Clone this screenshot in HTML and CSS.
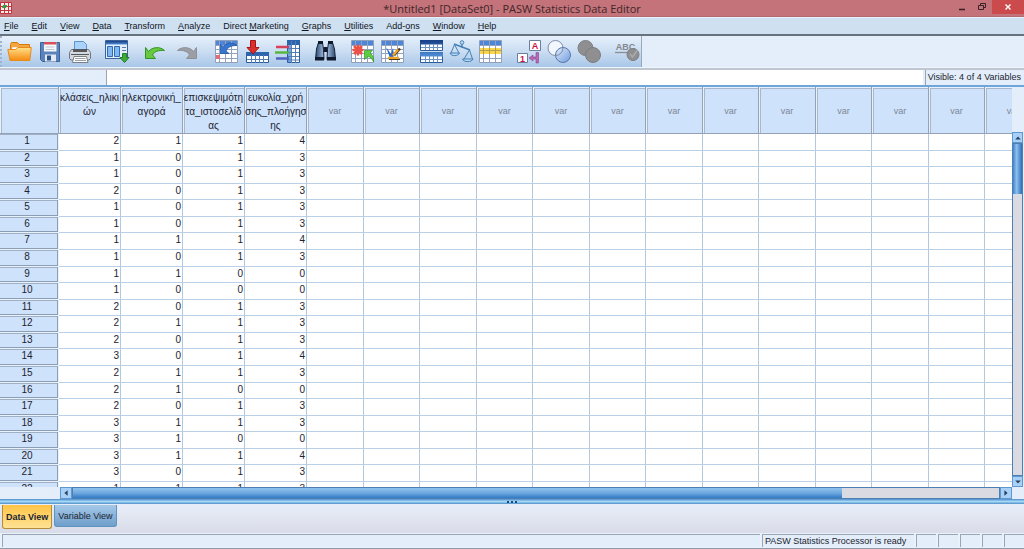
FILE: index.html
```html
<!DOCTYPE html>
<html lang="en">
<head>
<meta charset="utf-8">
<title>*Untitled1 [DataSet0] - PASW Statistics Data Editor</title>
<link rel="stylesheet" href="styles.css">
</head>
<body>
<svg class="defs" aria-hidden="true">
  <defs>
    <linearGradient id="gold" x1="0" y1="0" x2="0" y2="1"><stop offset="0" stop-color="#ffe08a"/><stop offset="1" stop-color="#f58a10"/></linearGradient>
    <linearGradient id="blue" x1="0" y1="0" x2="0" y2="1"><stop offset="0" stop-color="#173f86"/><stop offset="1" stop-color="#4f8ed6"/></linearGradient>
    <linearGradient id="disc" x1="0" y1="0" x2="1" y2="1"><stop offset="0" stop-color="#e2ebfa"/><stop offset="1" stop-color="#6f9de0"/></linearGradient>
    <linearGradient id="tube" x1="0" y1="0" x2="1" y2="0"><stop offset="0" stop-color="#2c466e"/><stop offset=".5" stop-color="#b9d4f4"/><stop offset="1" stop-color="#2c466e"/></linearGradient>
    <symbol id="sheet" viewBox="0 0 24 24">
      <path fill="#fff" stroke="#8fa0ba" d="M.5.5h22v22H.5z"/>
      <path fill="#4d86d8" d="M1 1h21v4H1z"/>
      <path fill="none" stroke="#93a3bd" d="M1 5.500h21M1 9.500h21M1 13.500h21M1 18.500h21M4.500 1v21M10.500 1v21M16.500 1v21"/>
    </symbol>
  </defs>
</svg>
<div class="window">
  <header class="titlebar">
    <svg class="app-icon" viewBox="0 0 12 12"><path fill="#f5efe9" stroke="#c9303e" d="M.5.5h11v11H.5z"/><path stroke="#c9303e" fill="none" d="M0 4.500h12M0 8.500h12M4.500 0v12M8.500 0v12"/><path fill="#3c9a46" d="M3 3h4l-1 3H2z"/></svg>
    <h1>*Untitled1 [DataSet0] - PASW Statistics Data Editor</h1>
    <div class="win-buttons">
      <button aria-label="Minimize"><svg viewBox="0 0 10 10"><path stroke="#3a2226" stroke-width="1.600" d="M2 7.500h6"/></svg></button>
      <button aria-label="Restore"><svg viewBox="0 0 10 10"><path fill="none" stroke="#3a2226" d="M1.500 3.500h5v4h-5zM3.500 3V1.500h5v4H7"/></svg></button>
      <button class="close" aria-label="Close"><svg viewBox="0 0 10 10"><path stroke="#fff" stroke-width="1.400" d="M2.500 2.500l5 5M7.500 2.500l-5 5"/></svg></button>
    </div>
  </header>

  <nav class="menubar" aria-label="Main menu">
    <a href="#"><u>F</u>ile</a><a href="#"><u>E</u>dit</a><a href="#"><u>V</u>iew</a><a href="#"><u>D</u>ata</a><a href="#"><u>T</u>ransform</a><a href="#"><u>A</u>nalyze</a><a href="#">Direct <u>M</u>arketing</a><a href="#"><u>G</u>raphs</a><a href="#"><u>U</u>tilities</a><a href="#">Add-<u>o</u>ns</a><a href="#"><u>W</u>indow</a><a href="#"><u>H</u>elp</a>
  </nav>

  <div class="toolband">
    <div class="toolbar" role="toolbar" aria-label="Data editor">
      <div class="group">
        <button aria-label="Open"><svg viewBox="0 0 25 24"><path fill="#f6a63a" stroke="#d9790d" d="M3.500 19V4.500l1-2h6l1.500 2h10.500V18z"/><path fill="#fff" stroke="#e2b069" stroke-width=".6" d="M5 7h16v5H5z"/><path fill="url(#gold)" stroke="#e58a1c" d="M.8 9.500h8l2-2h13.500l-1.500 13H3z"/></svg></button>
        <button aria-label="Save"><svg viewBox="0 0 25 24"><path fill="#5b83bd" stroke="#3c6297" d="M3.500 2.500h19v19h-17l-2-2z"/><path fill="#f7f7fa" d="M7 2h12.500v9.500H7z"/><path fill="#d9505c" d="M7 2h12.500v2.500H7z"/><path stroke="#bcc5d4" d="M8.500 7h9M8.500 9.500h9"/><path fill="#e3e9f2" d="M8 14.500h11v7H8z"/><path fill="#2c528b" d="M10 15.500h4v5h-4z"/></svg></button>
        <button aria-label="Print"><svg viewBox="0 0 25 24"><path fill="#a9d3fb" stroke="#5f93cc" d="M7.500 10V1.500h9l3 3V10z"/><path fill="#d5d8dc" stroke="#717780" d="M4.500 9.500h17l2 3v6l-1.500 1.500H4l-1.500-1.500v-6z"/><path fill="#55595f" d="M6 9h14v3H6zM4 14h18v1H4z"/><path fill="#fff" stroke="#7b8087" d="M7 16.500h12.500l1.500 6H5.500z"/><path stroke="#9da3aa" d="M8 18.500h10.500M8 20.500h11"/></svg></button>
      </div>
      <div class="group">
        <button aria-label="Recall dialog"><svg viewBox="0 0 25 24"><path fill="#e5effb" stroke="#3b6296" d="M.5.500h22v18H.5z"/><path fill="url(#blue)" d="M1 1h21v3.500H1z"/><path fill="#7eb8f0" stroke="#2f6ab0" d="M2.500 6.500h5v10h-5zM9.500 6.500h5v10h-5z"/><path stroke="#517fba" d="M17 7.500h4M17 10.500h4"/><path fill="#3cae35" stroke="#227e27" d="M17.500 13.500h4v4H24l-4.500 5-4.500-5h2.500z"/></svg></button>
      </div>
      <div class="group history">
        <button aria-label="Undo"><svg viewBox="0 0 25 24"><path fill="#68c83f" stroke="#2f9526" d="M2.500 7.500v11h10l-3-3.500c2-3.500 5.500-5 12-4.500-4-4-12-4-16 1z"/></svg></button>
        <button aria-label="Redo"><svg viewBox="0 0 25 24"><path fill="#9b9fa5" stroke="#8e9298" d="M21.500 7.500v11h-10l3-3.500c-2-3.500-5.500-5-12-4.500 4-4 12-4 16 1z"/></svg></button>
      </div>
      <div class="group">
        <button aria-label="Go to case"><svg viewBox="0 0 25 24"><use href="#sheet" width="24" height="24"/><path fill="#e36a76" d="M1 15h4v4H1z"/><path fill="#3776d0" stroke="#1b4fa0" stroke-width=".7" d="M5.500 4.500v9h8.500l-3-2.500c2-4 5-5.500 11-5.500-4-3.500-11-3-14 1.500z"/></svg></button>
        <button aria-label="Go to variable"><svg viewBox="0 0 25 24"><path fill="#fff" stroke="#2e5d9d" d="M1.500 12.500h22v10h-22z"/><path fill="#2c65ae" d="M1 12h23v4H1z"/><path stroke="#537fb5" d="M2 19.500h21M6.500 15v8M10.500 15v8M14.500 15v8M18.500 15v8"/><path fill="#dc2f2b" stroke="#a01616" d="M5.500.5h5v7H14l-6 6.500-6-6.500h3.500z"/></svg></button>
        <button aria-label="Variables"><svg viewBox="0 0 25 24"><path fill="#fff" stroke="#2e5d9d" d="M12.500.5h12v22h-12z"/><path fill="#73a6e4" d="M13 5h4v17h-4z"/><path fill="#2c65ae" d="M12 0h13v5H12z"/><path stroke="#537fb5" d="M13 8.500h11M13 12.500h11M13 16.500h11M13 20h11M16.500 1v22M20.500 1v22"/><path stroke="#d64258" stroke-width="2.500" d="M1 7h13"/><path stroke="#54b83f" stroke-width="2.500" d="M0 12.500h14"/><path stroke="#4d61bd" stroke-width="2.500" d="M1 18.500h13"/></svg></button>
      </div>
      <div class="group">
        <button aria-label="Find"><svg viewBox="0 0 25 24"><path fill="url(#tube)" stroke="#14233b" d="M5.500 2.500h4l1 7 .5 10H2.500L3.500 9zM15.500 2.500h4L21.500 9l1 10.500H14l.5-10z"/><path fill="#0f1a2c" d="M5 1h5v3H5zM15 1h5v3h-5zM2 17h9v3.500H2zM14 17h9v3.500h-9zM10.500 7h4v5h-4z"/></svg></button>
      </div>
      <div class="group">
        <button aria-label="Insert cases"><svg viewBox="0 0 25 24"><use href="#sheet" width="24" height="24"/><path stroke="#ec5148" stroke-width="2.500" d="M7 4.500v11M1.500 10h11M3 6l8 8M11 6l-8 8"/><path fill="#5bcd3e" stroke="#2f9526" stroke-width=".7" d="M13.500 10.500h8l-2.500 2.500c3 2 4 5 3.500 9-1-3-3-5-5.500-5.500l-3.500 3z"/></svg></button>
        <button aria-label="Insert variable"><svg viewBox="0 0 25 24"><use href="#sheet" width="24" height="24"/><path fill="#2b68c6" d="M5 7l5 7 2-6 1 7-1 3H9z"/><path stroke="#4d3a20" stroke-width="2.500" d="M13 15.500l6-7"/><path stroke="#eda42a" stroke-width="2.500" d="M7 18h11M12 15.500l5-6"/><path stroke="#4d3a20" d="M8 19.500h11"/></svg></button>
      </div>
      <div class="group">
        <button aria-label="Split file"><svg viewBox="0 0 25 24"><path fill="#fff" stroke="#2e5d9d" d="M1.500.5h22v10h-22zM1.500 12.500h22v10h-22z"/><path fill="url(#blue)" d="M1 0h23v4.500H1zM1 12h23v4.500H1z"/><path stroke="#6c92c1" d="M2 7.500h21M2 19.500h21M6.500 4v6M10.500 4v6M14.500 4v6M18.500 4v6M6.500 16v6M10.500 16v6M14.500 16v6M18.500 16v6"/></svg></button>
        <button aria-label="Weight cases"><svg viewBox="0 0 25 24"><g fill="none" stroke="#4680b5"><path stroke-width="1.400" d="M5 4l16 6M13 1v7"/><path d="M5.500 4.500L2 13M5.500 4.500L10 13M20.500 10L15 19M20.500 10l3 9"/></g><path fill="#b8d9f6" stroke="#4680b5" d="M1 13h9.500c-1 3.500-8.500 3.500-9.500 0zM13.500 19H24c-1 3.500-9.500 3.500-10.500 0z"/><circle cx="13" cy="2.500" r="1.800" fill="#c5e0f7" stroke="#4680b5"/></svg></button>
        <button aria-label="Select cases"><svg viewBox="0 0 25 24"><use href="#sheet" width="24" height="24"/><path fill="#f8d54b" d="M1 8h21v6H1z"/><path fill="none" stroke="#b69d49" d="M1 10.500h21M4.500 8v6M10.500 8v6M16.500 8v6"/></svg></button>
      </div>
      <div class="group">
        <button aria-label="Value labels"><svg viewBox="0 0 25 24"><path fill="#fff" stroke="#6b7e9c" d="M12.500.5h11v10h-11zM.5 13.500h10v9h-10z"/><path fill="#b867b5" stroke="#8e448e" stroke-width=".6" d="M12 18l4-3v2h3v-4.500h2.500V23H19v-4h-3v2z"/><text x="18" y="9" class="tag">A</text><text x="5.500" y="21.500" class="tag">1</text></svg></button>
        <button aria-label="Use variable sets"><svg viewBox="0 0 25 24"><circle cx="8.500" cy="8" r="7.500" fill="#f2f6fd" stroke="#7d8da8"/><circle cx="16" cy="15" r="7.500" fill="url(#disc)" stroke="#5878ac"/><path fill="none" stroke="#7d8da8" d="M16 8a7.500 7.500 0 0 1-7.500 7.500"/></svg></button>
        <button aria-label="Show all variables"><svg viewBox="0 0 25 24"><g fill="#8f8f91" stroke="#7d7d80"><circle cx="8.500" cy="8" r="7.500"/><circle cx="16" cy="15" r="7.500"/></g></svg></button>
      </div>
      <div class="group">
        <button aria-label="Spell check"><svg viewBox="0 0 25 24"><text x="10.500" y="10" class="abc">ABC</text><path stroke="#8a8d93" stroke-width="1.300" d="M0 12.500h17"/><circle cx="18" cy="14.500" r="6" fill="#8f8f91" stroke="#7d7d80"/><path fill="none" stroke="#a9abad" stroke-width="1.500" d="M15 14l2.500 3 5-7"/></svg></button>
      </div>
    </div>
  </div>

  <div class="cellbar">
    <output class="cell-name" aria-label="Cell"></output>
    <input class="cell-edit" type="text" aria-label="Cell value">
    <span class="visible">Visible: 4 of 4 Variables</span>
  </div>

  <main class="editor">
    <div class="sheet">
      <table>
        <colgroup id="cols"></colgroup>
        <thead><tr id="heads">
          <td class="corner"></td>
          <th scope="col">κλάσεις_ηλικι<br>ών</th>
          <th scope="col">ηλεκτρονική_<br>αγορά</th>
          <th scope="col">επισκεψιμότη<br>τα_ιστοσελίδ<br>ας</th>
          <th scope="col">ευκολία_χρή<br>σης_πλοήγησ<br>ης</th>
        </tr></thead>
        <tbody id="rows"></tbody>
      </table>
    </div>
    <div class="vscroll">
      <button aria-label="Scroll up"><svg viewBox="0 0 10 10"><path d="M5 3l3.500 4h-7z"/></svg></button>
      <div class="track"><div class="thumb"></div></div>
      <button aria-label="Scroll down"><svg viewBox="0 0 10 10"><path d="M5 7L1.500 3h7z"/></svg></button>
    </div>
    <div class="hscroll">
      <button aria-label="Scroll left"><svg viewBox="0 0 10 10"><path d="M3 5l4-3.500v7z"/></svg></button>
      <div class="track"><div class="thumb"></div></div>
      <button aria-label="Scroll right"><svg viewBox="0 0 10 10"><path d="M7 5L3 1.500v7z"/></svg></button>
    </div>
  </main>

  <div class="splitter"><i></i><i></i><i></i></div>

  <div class="tabs">
    <button class="tab active">Data View</button>
    <button class="tab">Variable View</button>
  </div>

  <footer class="status">
    <span class="grow"></span>
    <span class="message">PASW Statistics Processor is ready</span>
    <span></span><span></span><span></span><span></span><span></span>
  </footer>
</div>
<script src="grid.js"></script>
</body>
</html>
```
FILE: styles.css
```css
* { box-sizing: border-box; }

body {
  margin: 0;
  font-family: "Liberation Sans", Arial, sans-serif;
  font-size: 9px;
  color: #1b2430;
}

button {
  padding: 0;
  border: 0;
  background: none;
  font: inherit;
  color: inherit;
}

svg { display: block; }
.defs { position: absolute; width: 0; height: 0; }

.window {
  display: flex;
  flex-direction: column;
  height: 100vh;
  overflow: hidden;
  background: #e3eefa;
}

/* Title bar */
.titlebar {
  display: grid;
  grid-template-columns: 1fr auto 1fr;
  flex: none;
  height: 17px;
  background: #c37379;
  border-bottom: 1px solid #b5686e;
}
.app-icon { width: 12px; height: 12px; margin-top: 2px; }
.titlebar h1 {
  margin: 0;
  font: 400 11px/17px "Open Sans", "Noto Sans", sans-serif;
  color: #40252a;
}
.win-buttons { display: flex; justify-content: flex-end; }
.win-buttons button {
  display: grid;
  place-items: center;
  width: 20px;
  height: 14px;
}
.win-buttons svg { width: 10px; height: 10px; }
.win-buttons .close { width: 32px; background: #cb4a4c; }

/* Menu */
.menubar {
  display: flex;
  flex: none;
  gap: 13px;
  height: 19px;
  padding-left: 4px;
  line-height: 16px;
  background: #cfe0f1;
  border-top: 1px solid #e6f0fa;
  border-bottom: 2px solid #66737f;
}
.menubar a { color: #10151c; text-decoration: none; }

/* Toolbar */
.toolband {
  display: flex;
  flex: none;
  height: 32px;
  border-bottom: 1px solid #eff5fc;
  background: #e3eefa;
}
.toolbar {
  display: flex;
  align-items: center;
  gap: 12px;
  padding-left: 5px;
  background: linear-gradient(#e6f0fb, #cddff3 45%, #a9c7e8);
  border-left: 2px dotted #9fb4cb;
  border-right: 1px solid #9aa9ba;
}
.group { display: flex; gap: 4px; }
.history { gap: 6px; padding-right: 2px; }
.toolbar button { width: 26px; height: 24px; }
.toolbar svg { width: 25px; height: 24px; }
.tag { font: bold 9px "Liberation Sans", sans-serif; fill: #cf1048; text-anchor: middle; }
.abc { font: bold 9px "Liberation Sans", sans-serif; fill: #85888e; text-anchor: middle; }

/* Cell editor */
.cellbar {
  display: flex;
  flex: none;
  height: 19px;
  border-top: 2px solid #bfc6d2;
  border-bottom: 2px solid #6fa5d8;
}
.cell-name { width: 106px; }
.cell-edit {
  flex: 1;
  min-width: 0;
  border: 0;
  border-left: 1px solid #9aa5b3;
  padding: 0 4px;
  font: inherit;
  background: #fff;
}
.visible {
  margin-left: 2px;
  padding: 0 3px 0 2px;
  border-left: 1px solid #9aa5b3;
  line-height: 15px;
}

/* Data sheet */
.editor {
  display: grid;
  grid-template: minmax(0, 1fr) 12px / minmax(0, 1fr) 12px;
  flex: 1;
  min-height: 0;
}
.sheet { overflow: hidden; background: #fff; }
table { table-layout: fixed; width: 0; border-collapse: separate; border-spacing: 0; }
.head { width: 59px; }
.named { width: 62px; }
.wide { width: 57px; }
.narrow { width: 56px; }

thead th, .corner {
  height: 45px;
  padding: 0;
  background: #cfe2fb;
  border-right: 1px solid #93a2b5;
  border-bottom: 1px solid #93a2b5;
  box-shadow: inset 1px 1px #e8f2fe, inset 2px 2px #a9b7c9;
}
thead th {
  font-size: 10px;
  font-weight: 400;
  line-height: 14px;
  vertical-align: top;
  padding-top: 4px;
  white-space: nowrap;
  overflow: hidden;
}
thead .empty { vertical-align: middle; padding-top: 2px; font-size: 9px; color: #7b8796; }

tbody th, tbody td {
  height: 17px;
  padding: 0;
  font-size: 10px;
  font-weight: 400;
  line-height: 12px;
  vertical-align: top;
}
/* Short rows keep the average pitch just over 16px */
tbody tr:nth-child(7n+2) > *,
tbody tr:nth-child(7n+4) > *,
tbody tr:nth-child(7n+6) > * { height: 16px; }

tbody th {
  padding: 1px 4px 0 0;
  background: #cfe2fb;
  border-right: 1px solid #e8f2fe;
  border-bottom: 1px solid #e8f2fe;
  box-shadow: inset -1px -1px #8b9eb4, inset 0 1px #9fb0c4;
}
tbody td {
  padding: 1px 1px 0 0;
  text-align: right;
  border-right: 1px solid #b3c8dd;
  border-bottom: 1px solid #b9d0e6;
}

/* Scroll bars */
.vscroll, .hscroll { display: flex; background: #e3eefa; }
.vscroll { flex-direction: column; padding-top: 45px; }
.hscroll { padding-left: 60px; }
.vscroll button, .hscroll button {
  flex: none;
  display: grid;
  place-items: center;
  width: 12px;
  height: 12px;
  background: #a9d0f6;
  border: 1px solid #5f97d0;
}
.vscroll svg, .hscroll svg { width: 8px; height: 8px; fill: #26415f; }
.vscroll button { height: 11px; width: 11px; }
.track { display: flex; flex: 1; background: #d9dae2; border: 1px solid #4f7fb2; }
.vscroll .track { flex-direction: column; width: 11px; }
.vscroll .thumb { height: 15%; background: linear-gradient(90deg, #3f85cc, #8ebfee 40%, #2d6fb8); }
.hscroll .thumb { width: 83%; background: linear-gradient(#8ec2ef, #6fa8df 50%, #2f7ac6); }

.splitter {
  display: flex;
  flex: none;
  justify-content: center;
  align-items: center;
  gap: 2px;
  height: 5px;
  background: linear-gradient(#4d8dcb, #a6d8f8 50%, #4f8fc8);
}
.splitter i { width: 2px; height: 2px; background: #174a80; }

/* View tabs */
.tabs {
  display: flex;
  flex: none;
  align-items: flex-start;
  gap: 2px;
  height: 29px;
  padding-left: 2px;
  background: linear-gradient(#e8eef9, #d9dce8);
}
.tab {
  height: 22px;
  margin-top: 1px;
  padding: 0 3px;
  border: 1px solid #5f92c0;
  border-top: 0;
  border-radius: 0 0 3px 3px;
  background: linear-gradient(#a5c8e8, #6f9fcb);
}
.tab.active {
  height: 24px;
  border-color: #b58b35;
  font-weight: 700;
  background: linear-gradient(#ffc445, #ffe295);
}

/* Status bar */
.status {
  display: flex;
  flex: none;
  gap: 2px;
  height: 16px;
  padding: 1px 0 1px 2px;
  background: #e9f1fa;
  border-bottom: 1px solid #8f99a6;
}
.status span {
  width: 20px;
  background: #e3eefa;
  border-top: 1px solid #9aa5b3;
  border-left: 1px solid #9aa5b3;
}
.status .grow { flex: 1; }
.status .message { width: 152px; padding-left: 2px; line-height: 13px; white-space: nowrap; }
```
FILE: grid.js
```js
const EMPTY_COLUMNS = 13;
const cases = [
  [2, 1, 1, 4], [1, 0, 1, 3], [1, 0, 1, 3], [2, 0, 1, 3], [1, 0, 1, 3],
  [1, 0, 1, 3], [1, 1, 1, 4], [1, 0, 1, 3], [1, 1, 0, 0], [1, 0, 0, 0],
  [2, 0, 1, 3], [2, 1, 1, 3], [2, 0, 1, 3], [3, 0, 1, 4], [2, 1, 1, 3],
  [2, 1, 0, 0], [2, 0, 1, 3], [3, 1, 1, 3], [3, 1, 0, 0], [3, 1, 1, 4],
  [3, 0, 1, 3], [1, 1, 1, 3],
];

const widths = ['head', 'named', 'named', 'named', 'named'];
for (let i = 0; i < EMPTY_COLUMNS; i++) {
  widths.push(i % 2 ? 'narrow' : 'wide');
}
document.getElementById('cols').innerHTML =
  widths.map((name) => `<col class="${name}">`).join('');

document.getElementById('heads').insertAdjacentHTML(
  'beforeend', '<th scope="col" class="empty">var</th>'.repeat(EMPTY_COLUMNS));

document.getElementById('rows').innerHTML = cases.map((values, i) =>
  `<tr><th scope="row">${i + 1}</th>` +
  values.map((v) => `<td>${v}</td>`).join('') +
  '<td></td>'.repeat(EMPTY_COLUMNS) + '</tr>').join('');
```
